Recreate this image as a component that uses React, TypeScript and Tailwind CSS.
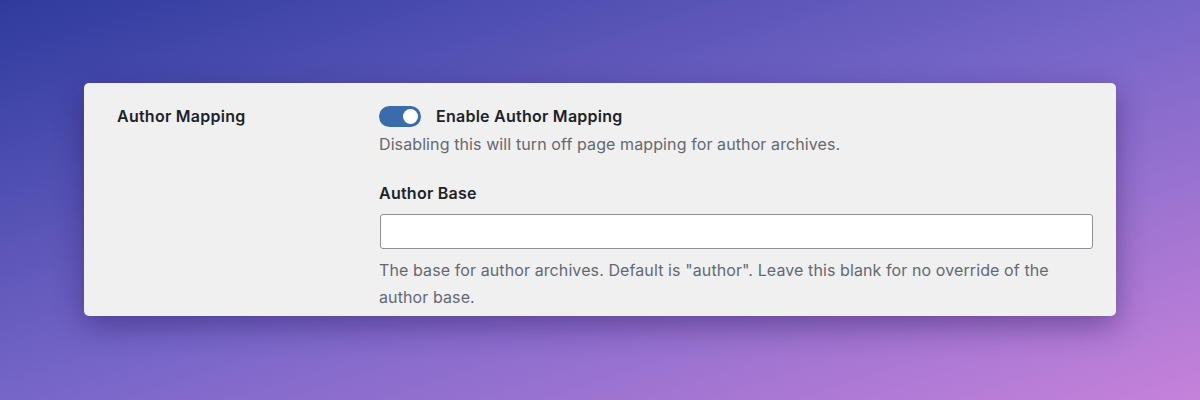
import React from "react";

export default function App() {
  return (
    <div
      className="w-[1200px] h-[400px] overflow-hidden bg-[linear-gradient(to_bottom_right,#2e3b9d,#7666c8,#c682da)] pt-[83px] pl-[84px]"
      style={{ fontFamily: "Inter, 'Noto Sans', sans-serif" }}
    >
      <div className="w-[1032px] h-[233px] rounded-[5px] bg-[#f0f0f1] shadow-[0_10px_30px_rgba(40,20,90,0.45)] flex">
        <div className="w-[295px] pl-[33px] pt-[22px] text-[16px] tracking-[0.25px] font-semibold text-[#1d2327] leading-[22px]">
          Author Mapping
        </div>
        <div className="flex-1 pr-[22px] pt-[22px]">
          <div className="flex items-center gap-[15px] h-[22px]">
            <div className="w-[42px] h-[21px] rounded-full bg-[#3a6bab] flex items-center justify-end pr-[3px]">
              <div className="w-[15px] h-[15px] rounded-full bg-white" />
            </div>
            <span className="text-[16px] tracking-[0.25px] font-semibold text-[#1d2327]">Enable Author Mapping</span>
          </div>
          <p className="mt-[6px] text-[16px] tracking-[0.1px] leading-[22px] text-[#646970]">
            Disabling this will turn off page mapping for author archives.
          </p>
          <div className="mt-[27px] text-[16px] tracking-[0.25px] font-semibold text-[#1d2327] leading-[22px]">Author Base</div>
          <input
            type="text"
            className="mt-[10px] ml-[1px] block w-[713px] h-[35px] bg-white border border-[#8c8f94] rounded-[3px]"
          />
          <p className="mt-[8px] text-[16px] tracking-[0.1px] leading-[27px] text-[#646970] w-[690px]">
            The base for author archives. Default is "author". Leave this blank for no override of the author base.
          </p>
        </div>
      </div>
    </div>
  );
}
